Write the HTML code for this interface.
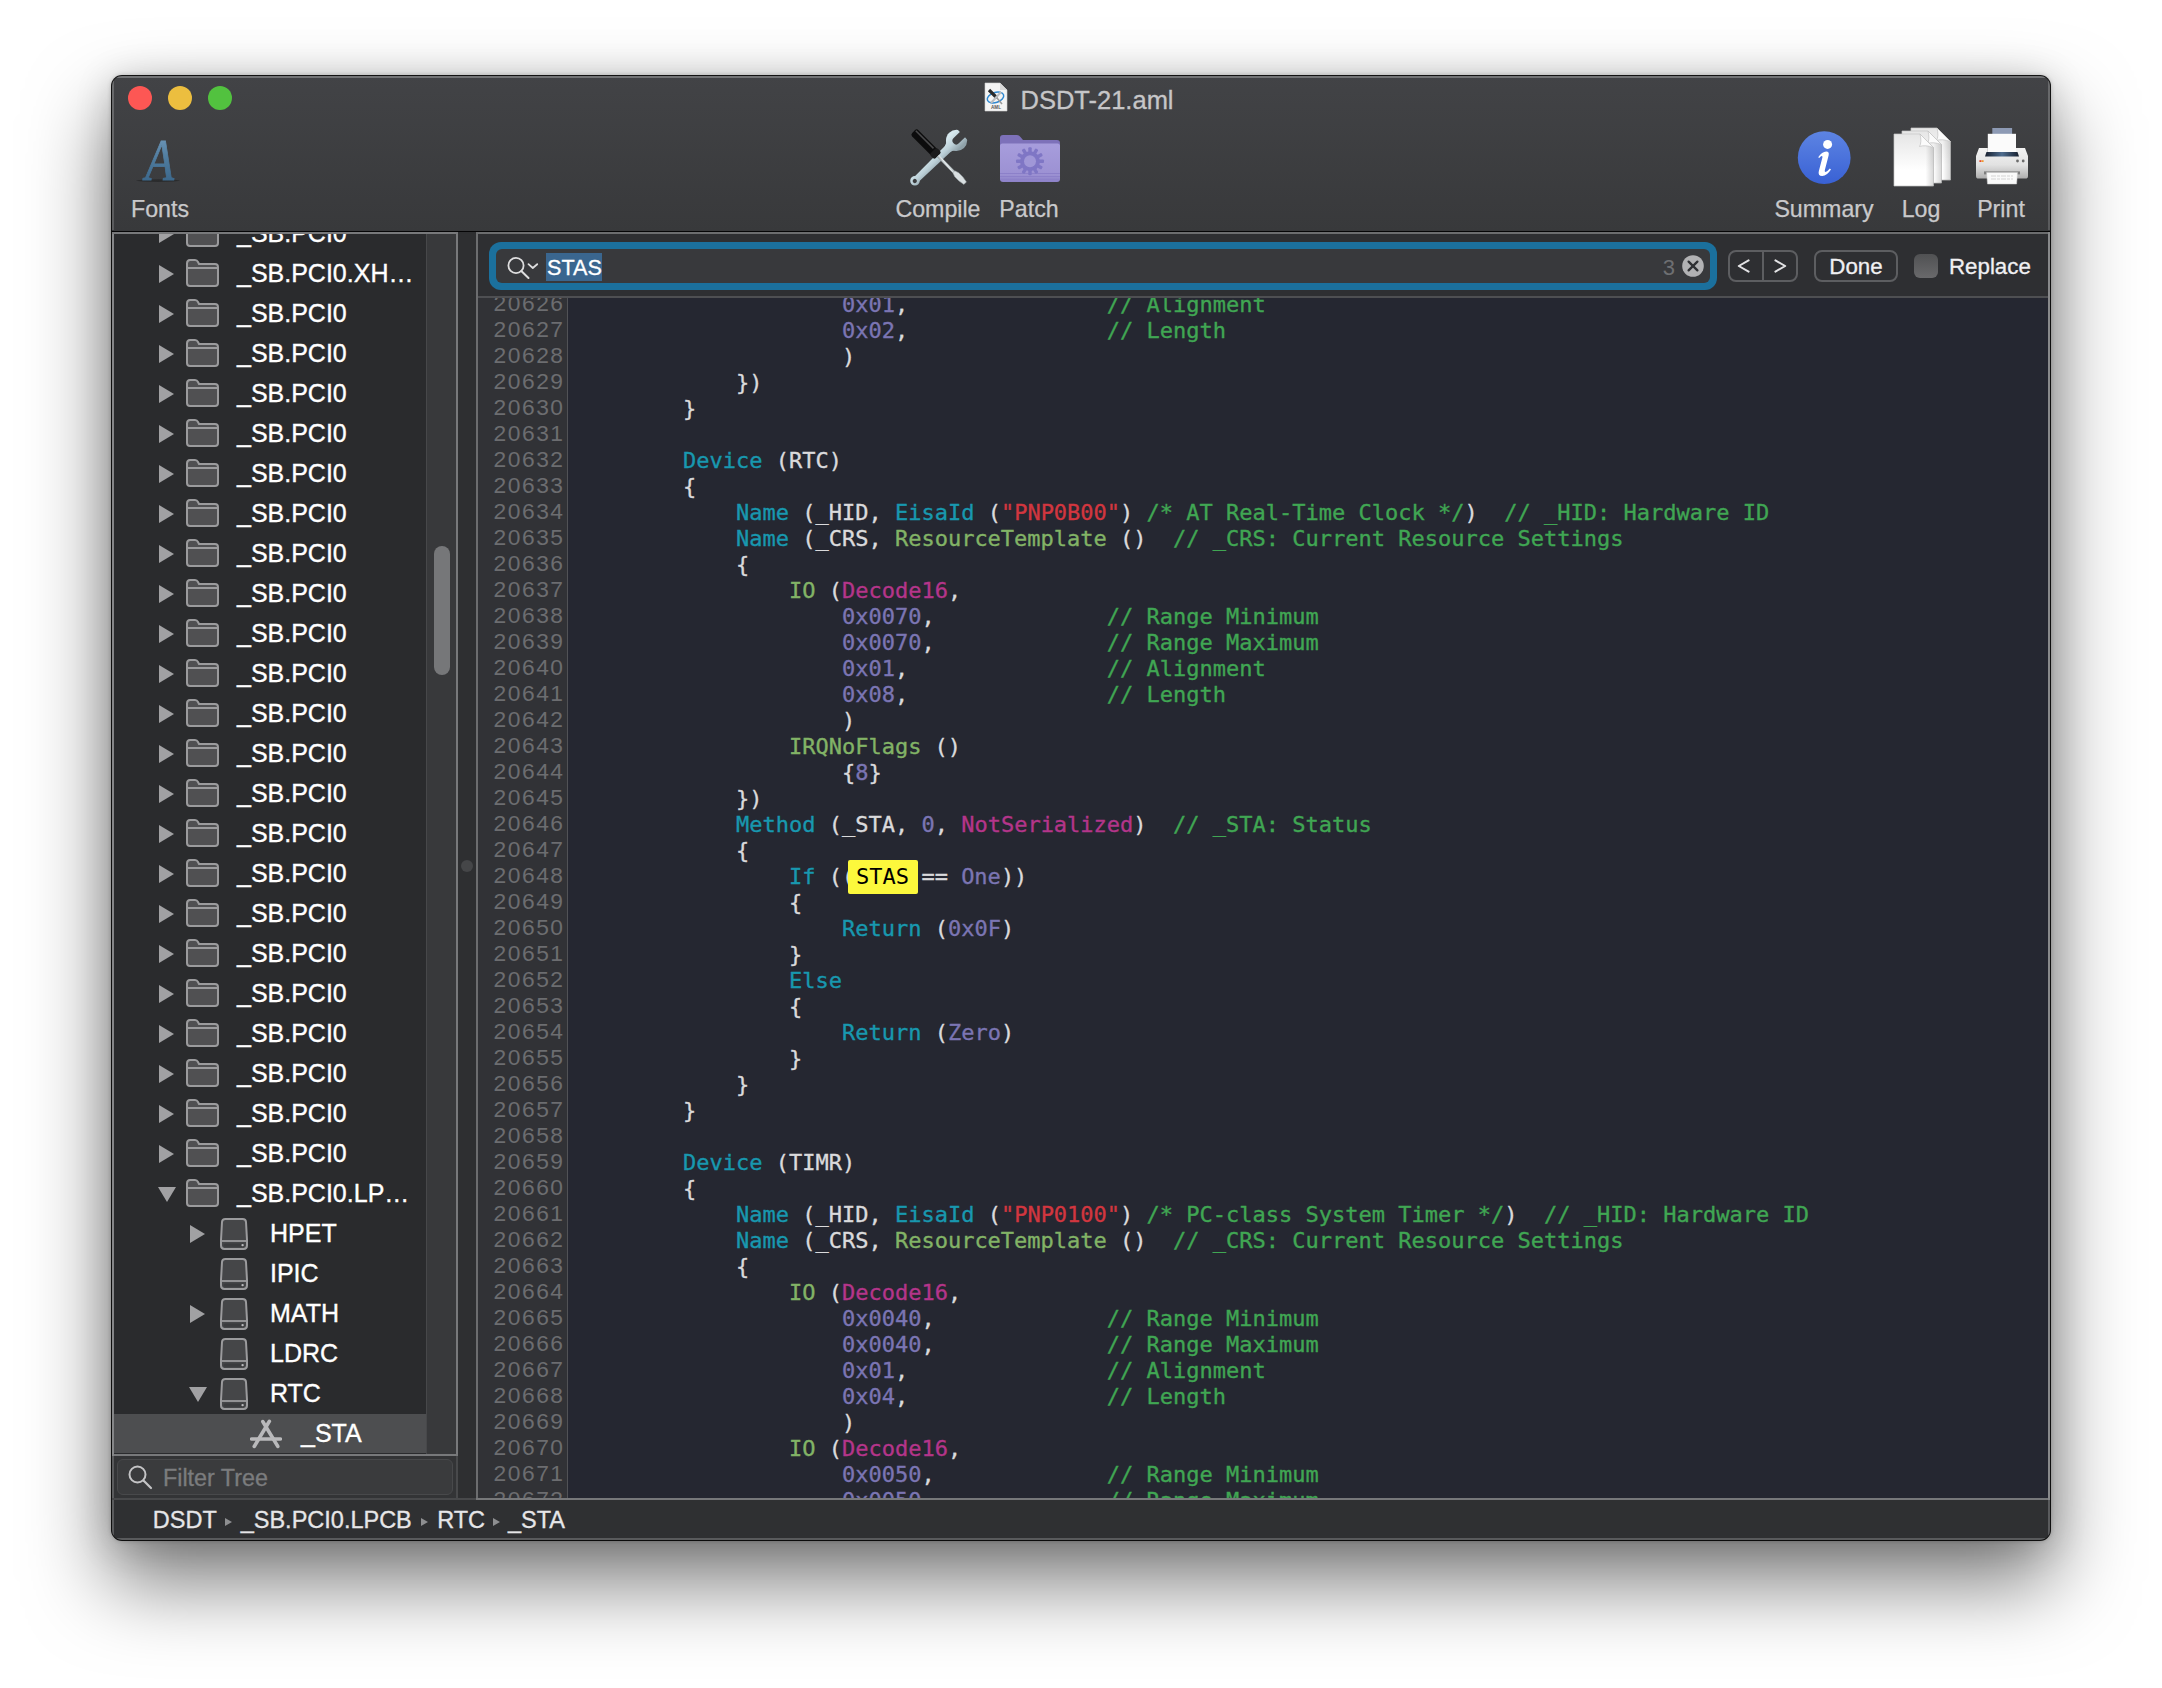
<!DOCTYPE html><html><head><meta charset="utf-8"><title>DSDT-21.aml</title><style>
html,body{margin:0;padding:0;}
body{width:2162px;height:1688px;background:#fff;overflow:hidden;position:relative;font-family:"Liberation Sans", sans-serif;}
#shadow{position:absolute;left:112px;top:76px;width:1938px;height:1464px;border-radius:10px;background:#2f3032;
 box-shadow:0 0 0 1px rgba(0,0,0,.9),0 40px 80px 4px rgba(0,0,0,.50),0 4px 36px 2px rgba(0,0,0,.16),0 0 5px rgba(0,0,0,.3);}
#win{position:absolute;left:0;top:0;width:2162px;height:1688px;clip-path:inset(76px 112px 148px 112px round 10px);}
#win div,#win span,#win svg{position:absolute;}
#win span.t{position:static;}
#tb{left:112px;top:76px;width:1938px;height:155px;background:linear-gradient(#424346,#38393b);}
#tbhl{left:112px;top:76px;width:1938px;height:2px;background:#737476;}
#tbline{left:112px;top:231px;width:1938px;height:1px;background:#050506;}
.lbl{font-size:23.2px;color:#c9c9cb;-webkit-text-stroke:.25px;white-space:nowrap;line-height:26px;height:26px;text-align:center;}
#title{left:1020.5px;top:83.5px;font-size:25.5px;line-height:32px;color:#c6c6c8;white-space:nowrap;-webkit-text-stroke:.3px;}
/* sidebar */
#side{left:112px;top:232px;width:346px;height:1224px;background:#78797b;}
#tree{left:114px;top:234px;width:312px;height:1220px;background:#2a2b2d;overflow:hidden;}
#track{left:426px;top:234px;width:30px;height:1220px;background:#38393b;border-left:1px solid #47484a;box-sizing:border-box;}
#thumb{left:434px;top:546px;width:16px;height:129px;border-radius:8px;background:#767779;}
#filt{left:112px;top:1456px;width:346px;height:42px;background:#333436;border-right:2px solid #48494b;border-left:2px solid #5a5b5d;box-sizing:border-box;}
#ff{left:117px;top:1459px;width:336px;height:36px;background:#3a3b3d;border:1px solid #48494b;border-radius:6px;box-sizing:border-box;}
#fft{left:163px;top:1465px;font-size:23.3px;line-height:26px;color:#7b7c7e;-webkit-text-stroke:.3px #7b7c7e;white-space:nowrap;}
.row{left:0;width:312px;height:40px;}
.row .tx{font-size:25px;line-height:40px;color:#fff;white-space:nowrap;top:0;-webkit-text-stroke:.35px #fff;}
#divd{left:458px;top:232px;width:18px;height:1266px;background:#2e2f31;}
#dot{left:461px;top:860px;width:12px;height:12px;border-radius:6px;background:#454648;}
/* editor */
#ed{left:476px;top:232px;width:1574px;height:1266px;background:#6c6d6f;}
#find{left:478px;top:234px;width:1570px;height:62px;background:#2e2f32;}
#findline{left:478px;top:296px;width:1570px;height:2px;background:#4e4f52;}
#gut{left:478px;top:298px;width:90px;height:1200px;background:#313236;border-right:1px solid #515256;box-sizing:border-box;overflow:hidden;}
#code{left:568px;top:298px;width:1480px;height:1200px;background:#252731;overflow:hidden;}
.ln{right:2.5px;width:84px;text-align:right;font-size:22.8px;letter-spacing:1.5px;color:#6c6d70;line-height:26px;height:26px;white-space:nowrap;}
.cl{left:9px;font-family:"DejaVu Sans Mono", "Liberation Mono", monospace;font-size:22px;line-height:26px;height:26px;color:#dadadc;white-space:pre;-webkit-text-stroke:.35px;}
.k{color:#1898af;} .g{color:#82b366;} .m{color:#b4358a;} .n{color:#7b75b3;} .s{color:#d2363f;} .c{color:#40a653;}
#hl{left:848px;top:860px;width:70px;height:34px;background:#fcf83c;border-radius:2px;}
#hlt{left:0;top:0;font-family:"DejaVu Sans Mono", "Liberation Mono", monospace;font-size:22px;line-height:26px;color:#000;white-space:pre;}
/* status */
#stline{left:112px;top:1498px;width:1938px;height:2px;background:linear-gradient(90deg,#48494b 364px,#77787a 364px);}
#st{left:112px;top:1500px;width:1938px;height:40px;background:#2f3032;}
.sts{top:1504.5px;font-size:23.5px;line-height:30px;color:#e6e6e8;white-space:nowrap;-webkit-text-stroke:.3px #e6e6e8;}
#stt .ar{color:#8a8b8d;font-size:13px;position:static;vertical-align:2px;margin:0 7px;}
</style></head><body>
<div id="shadow"></div><div id="win">
<div id="tb"></div><div id="tbhl"></div><div id="tbline"></div>
<div style="left:128px;top:86px;width:24px;height:24px;border-radius:12px;background:#fd5754"></div>
<div style="left:168px;top:86px;width:24px;height:24px;border-radius:12px;background:#ecbe3f"></div>
<div style="left:208px;top:86px;width:24px;height:24px;border-radius:12px;background:#52c23f"></div>
<div id="title">DSDT-21.aml</div>
<div class="lbl" style="left:60px;top:195.5px;width:200px">Fonts</div>
<div class="lbl" style="left:838px;top:195.5px;width:200px">Compile</div>
<div class="lbl" style="left:929px;top:195.5px;width:200px">Patch</div>
<div class="lbl" style="left:1724px;top:195.5px;width:200px">Summary</div>
<div class="lbl" style="left:1821px;top:195.5px;width:200px">Log</div>
<div class="lbl" style="left:1901px;top:195.5px;width:200px">Print</div>
<svg style="left:120px;top:120px" width="80" height="72" viewBox="0 0 80 72"><defs><linearGradient id="ag" gradientUnits="userSpaceOnUse" x1="0" y1="-42" x2="0" y2="2"><stop offset="0" stop-color="#6a94b6"/><stop offset=".5" stop-color="#4d7a9d"/><stop offset="1" stop-color="#3b678b"/></linearGradient></defs><ellipse cx="38" cy="60.6" rx="22" ry="1.3" fill="#000" opacity=".28"/><text transform="translate(39.5 60.2) scale(.79 1)" text-anchor="middle" font-family="'Liberation Serif',serif" font-style="italic" font-size="59.5" fill="url(#ag)" stroke="url(#ag)" stroke-width=".9">A</text></svg>
<svg style="left:984px;top:82px" width="24" height="30" viewBox="0 0 24 30"><path d="M1 1H16L23 8V29H1Z" fill="#f4f4f4" stroke="#d0d0d0" stroke-width=".6"/><path d="M16 1V8H23Z" fill="#d9d9d9"/><ellipse cx="11.5" cy="15.5" rx="8.5" ry="5" fill="none" stroke="#2f88d0" stroke-width="1.5" transform="rotate(-18 11.5 15.5)"/><path d="M5 8L13 16" stroke="#2a2a2a" stroke-width="3.2"/><path d="M13 16L18 22" stroke="#9a9a9a" stroke-width="1.5"/><path d="M17 10L7 21" stroke="#b9bcc0" stroke-width="2"/><text x="12" y="27.3" font-family="Liberation Sans, sans-serif" font-size="4.6" font-weight="bold" text-anchor="middle" fill="#555">AML</text></svg>
<svg style="left:908px;top:126px" width="62" height="62" viewBox="-2 -2 62 62">
<defs><linearGradient id="wr" x1="0" y1="0" x2="1" y2="1"><stop offset="0" stop-color="#d3e6ec"/><stop offset=".6" stop-color="#a9bdc5"/><stop offset="1" stop-color="#8e9fa6"/></linearGradient>
<linearGradient id="wr2" x1="0" y1="0" x2="0" y2="1"><stop offset=".3" stop-color="#d6e8ee"/><stop offset=".5" stop-color="#bcd0d8"/><stop offset=".7" stop-color="#8fa1a9"/></linearGradient><linearGradient id="sh" x1="0" y1="1" x2="1" y2="0"><stop offset="0" stop-color="#8d979b"/><stop offset=".5" stop-color="#e4eaec"/><stop offset="1" stop-color="#9aa4a8"/></linearGradient></defs>
<mask id="wm" maskUnits="userSpaceOnUse" x="-10" y="-20" width="90" height="40"><rect x="-10" y="-20" width="90" height="40" fill="#000"/><circle cx="0" cy="0" r="4.8" fill="#fff"/><path d="M2 -3.3L50 -4.2V4.2L2 3.3Z" fill="#fff"/><circle cx="58" cy="0" r="10.6" fill="#fff"/><path d="M45 -3.8Q49 -4.5 51 -8L53 0L51 8Q49 4.5 45 3.8Z" fill="#fff"/><path d="M75 -3.7H57.5Q53.8 -3.7 53.8 0Q53.8 3.7 57.5 3.7H75Z" fill="#000"/><rect x="66.2" y="-12" width="10" height="24" fill="#000"/><circle cx="-0.3" cy="0" r="2.1" fill="#000"/></mask>
<g transform="translate(5 52.8) rotate(-44.2)"><rect x="-10" y="-20" width="90" height="40" fill="url(#wr2)" mask="url(#wm)"/></g>
<g transform="rotate(45 29 29)"><rect x="-7" y="24.6" width="34" height="8.8" rx="2.5" fill="#0c0c0d"/><rect x="-6" y="26" width="25" height="1.6" fill="#4a4a4c"/><rect x="20.5" y="24" width="7" height="10" rx="2" fill="#1b1b1c"/><rect x="27.5" y="27.6" width="24" height="2.8" fill="url(#sh)"/><path d="M50 27.6L54 26.2H60L66 27.2V30.8L60 31.8H54L50 30.4Z" fill="#d9dfe1" stroke="#8f989c" stroke-width=".5"/></g></svg>
<svg style="left:998px;top:133px" width="64" height="52" viewBox="0 0 64 52">
<defs><linearGradient id="pf" x1="0" y1="0" x2="0" y2="1"><stop offset="0" stop-color="#a79ddc"/><stop offset=".8" stop-color="#9c91d3"/><stop offset="1" stop-color="#8d82c8"/></linearGradient></defs>
<path d="M2 5Q2 2 5 2H19Q21 2 22.5 4L25 7H59Q62 7 62 10V20H2Z" fill="#7d71b9"/>
<path d="M2 13Q2 10.5 4.5 10.5H59.5Q62 10.5 62 13V46Q62 49 59 49H5Q2 49 2 46Z" fill="url(#pf)"/>
<path d="M2 40.5H62M2 43.5H62M2 46.3H62" stroke="#8c80c9" stroke-width="1"/>
<g transform="translate(32 28.2)" fill="#7f76c5"><circle r="10" /><g id="tth"><rect x="-1.7" y="-14" width="3.4" height="6" rx="1"/></g><use href="#tth" transform="rotate(30)"/><use href="#tth" transform="rotate(60)"/><use href="#tth" transform="rotate(90)"/><use href="#tth" transform="rotate(120)"/><use href="#tth" transform="rotate(150)"/><use href="#tth" transform="rotate(180)"/><use href="#tth" transform="rotate(210)"/><use href="#tth" transform="rotate(240)"/><use href="#tth" transform="rotate(270)"/><use href="#tth" transform="rotate(300)"/><use href="#tth" transform="rotate(330)"/><circle r="6" fill="#a097d7"/></g></svg>
<svg style="left:1796px;top:130px" width="56" height="56" viewBox="0 0 56 56"><defs><linearGradient id="sm" x1="0" y1="0" x2="0" y2="1"><stop offset="0" stop-color="#5d84e3"/><stop offset="1" stop-color="#3961d4"/></linearGradient></defs><circle cx="28.2" cy="27.7" r="26.4" fill="url(#sm)"/><circle cx="31.6" cy="14.4" r="4.5" fill="#fff"/><path d="M22.2 27.2Q26 22 30.2 21.6Q33.6 21.6 32.6 25.6L28.8 40.2Q28.4 42 29.6 42Q31.4 41.6 33.8 38.6L35 39.4Q31 45.6 26.2 46Q21.6 46 22.8 41.2L26.4 27.6Q26.8 25.8 25.6 26Q24.4 26.4 23.2 28Z" fill="#fff"/></svg>
<svg style="left:1892px;top:126px" width="62" height="62" viewBox="0 0 62 62"><defs><linearGradient id="dg" x1="0" y1="0" x2="0" y2="1"><stop offset="0" stop-color="#e6e6e6"/><stop offset=".7" stop-color="#ffffff"/></linearGradient></defs>
<linearGradient id="de" x1="0" y1="0" x2="1" y2="0"><stop offset=".8" stop-color="#000" stop-opacity="0"/><stop offset="1" stop-color="#000" stop-opacity=".16"/></linearGradient><g id="docp"><path d="M19 2H45L58.5 15.5V54H19Z" fill="url(#dg)" stroke="#c4c4c4" stroke-width=".7"/><path d="M19 2H45L58.5 15.5V54H19Z" fill="url(#de)"/><path d="M45 2Q47 10 44.5 14.5Q50 12.6 58.5 15.5Z" fill="#fbfbfb" stroke="#c2c2c2" stroke-width=".7"/></g>
<use href="#docp" x="-9" y="3"/><use href="#docp" x="-17" y="6"/></svg>
<svg style="left:1974px;top:126px" width="56" height="60" viewBox="0 0 56 60"><defs><linearGradient id="pb" x1="0" y1="0" x2="0" y2="1"><stop offset="0" stop-color="#f3f3f3"/><stop offset=".55" stop-color="#e2e2e2"/><stop offset="1" stop-color="#aeaeae"/></linearGradient><linearGradient id="ps" x1="0" y1="0" x2="1" y2="0"><stop offset="0" stop-color="#17202f"/><stop offset=".5" stop-color="#4f6d8f"/><stop offset="1" stop-color="#17202f"/></linearGradient></defs>
<rect x="18.3" y="2" width="19.8" height="7" fill="#8d9ab4"/><rect x="16.4" y="14" width="23.6" height="12" fill="#7d8aa6"/>
<rect x="13.8" y="7.8" width="28.2" height="19" fill="#fbfbfb"/>
<path d="M5 22H13.8V27H42V22H51L54 30V50Q54 52.6 51.4 52.6H4.6Q2 52.6 2 50V30Z" fill="url(#pb)"/>
<path d="M12.5 26H43.5L45 30.4H11Z" fill="url(#ps)"/>
<rect x="5.4" y="34.2" width="2" height="1.8" fill="#e8452c"/><rect x="7.6" y="34.2" width="2" height="1.8" fill="#f09a2c"/>
<circle cx="43.5" cy="35" r="1.4" fill="#6c6c6c"/><circle cx="49.2" cy="35" r="1.4" fill="#6c6c6c"/>
<rect x="10" y="45.4" width="36" height="3" fill="#7e7e7e"/>
<path d="M12.6 46.4H43.5L42.6 58H13.5Z" fill="#fafafa" stroke="#cfcfcf" stroke-width=".5"/>
<path d="M17 50H39M17 53H39" stroke="#d4d4d4" stroke-width="1.2" stroke-dasharray="5 1 3 1"/></svg>

<div id="side"></div><div id="tree">
<div class="row" style="top:-21px;"><svg style="left:45px;top:12px" width="15" height="18" viewBox="0 0 15 18"><path d="M0 0L15 9L0 18Z" fill="#a1a1a3"/></svg><svg style="left:72px;top:6px" width="33" height="28" viewBox="0 0 33 28"><path d="M1 4.5Q1 1 4 1H9Q11 1 12 3L13 5H29Q32 5 32 8V24Q32 27 29 27H4Q1 27 1 24Z" fill="#505052" stroke="#9b9b9d" stroke-width="2"/><path d="M1 9H32" stroke="#9b9b9d" stroke-width="2"/></svg><span class="tx" style="left:123px">_SB.PCI0</span></div>
<div class="row" style="top:19px;"><svg style="left:45px;top:12px" width="15" height="18" viewBox="0 0 15 18"><path d="M0 0L15 9L0 18Z" fill="#a1a1a3"/></svg><svg style="left:72px;top:6px" width="33" height="28" viewBox="0 0 33 28"><path d="M1 4.5Q1 1 4 1H9Q11 1 12 3L13 5H29Q32 5 32 8V24Q32 27 29 27H4Q1 27 1 24Z" fill="#505052" stroke="#9b9b9d" stroke-width="2"/><path d="M1 9H32" stroke="#9b9b9d" stroke-width="2"/></svg><span class="tx" style="left:123px">_SB.PCI0.XH…</span></div>
<div class="row" style="top:59px;"><svg style="left:45px;top:12px" width="15" height="18" viewBox="0 0 15 18"><path d="M0 0L15 9L0 18Z" fill="#a1a1a3"/></svg><svg style="left:72px;top:6px" width="33" height="28" viewBox="0 0 33 28"><path d="M1 4.5Q1 1 4 1H9Q11 1 12 3L13 5H29Q32 5 32 8V24Q32 27 29 27H4Q1 27 1 24Z" fill="#505052" stroke="#9b9b9d" stroke-width="2"/><path d="M1 9H32" stroke="#9b9b9d" stroke-width="2"/></svg><span class="tx" style="left:123px">_SB.PCI0</span></div>
<div class="row" style="top:99px;"><svg style="left:45px;top:12px" width="15" height="18" viewBox="0 0 15 18"><path d="M0 0L15 9L0 18Z" fill="#a1a1a3"/></svg><svg style="left:72px;top:6px" width="33" height="28" viewBox="0 0 33 28"><path d="M1 4.5Q1 1 4 1H9Q11 1 12 3L13 5H29Q32 5 32 8V24Q32 27 29 27H4Q1 27 1 24Z" fill="#505052" stroke="#9b9b9d" stroke-width="2"/><path d="M1 9H32" stroke="#9b9b9d" stroke-width="2"/></svg><span class="tx" style="left:123px">_SB.PCI0</span></div>
<div class="row" style="top:139px;"><svg style="left:45px;top:12px" width="15" height="18" viewBox="0 0 15 18"><path d="M0 0L15 9L0 18Z" fill="#a1a1a3"/></svg><svg style="left:72px;top:6px" width="33" height="28" viewBox="0 0 33 28"><path d="M1 4.5Q1 1 4 1H9Q11 1 12 3L13 5H29Q32 5 32 8V24Q32 27 29 27H4Q1 27 1 24Z" fill="#505052" stroke="#9b9b9d" stroke-width="2"/><path d="M1 9H32" stroke="#9b9b9d" stroke-width="2"/></svg><span class="tx" style="left:123px">_SB.PCI0</span></div>
<div class="row" style="top:179px;"><svg style="left:45px;top:12px" width="15" height="18" viewBox="0 0 15 18"><path d="M0 0L15 9L0 18Z" fill="#a1a1a3"/></svg><svg style="left:72px;top:6px" width="33" height="28" viewBox="0 0 33 28"><path d="M1 4.5Q1 1 4 1H9Q11 1 12 3L13 5H29Q32 5 32 8V24Q32 27 29 27H4Q1 27 1 24Z" fill="#505052" stroke="#9b9b9d" stroke-width="2"/><path d="M1 9H32" stroke="#9b9b9d" stroke-width="2"/></svg><span class="tx" style="left:123px">_SB.PCI0</span></div>
<div class="row" style="top:219px;"><svg style="left:45px;top:12px" width="15" height="18" viewBox="0 0 15 18"><path d="M0 0L15 9L0 18Z" fill="#a1a1a3"/></svg><svg style="left:72px;top:6px" width="33" height="28" viewBox="0 0 33 28"><path d="M1 4.5Q1 1 4 1H9Q11 1 12 3L13 5H29Q32 5 32 8V24Q32 27 29 27H4Q1 27 1 24Z" fill="#505052" stroke="#9b9b9d" stroke-width="2"/><path d="M1 9H32" stroke="#9b9b9d" stroke-width="2"/></svg><span class="tx" style="left:123px">_SB.PCI0</span></div>
<div class="row" style="top:259px;"><svg style="left:45px;top:12px" width="15" height="18" viewBox="0 0 15 18"><path d="M0 0L15 9L0 18Z" fill="#a1a1a3"/></svg><svg style="left:72px;top:6px" width="33" height="28" viewBox="0 0 33 28"><path d="M1 4.5Q1 1 4 1H9Q11 1 12 3L13 5H29Q32 5 32 8V24Q32 27 29 27H4Q1 27 1 24Z" fill="#505052" stroke="#9b9b9d" stroke-width="2"/><path d="M1 9H32" stroke="#9b9b9d" stroke-width="2"/></svg><span class="tx" style="left:123px">_SB.PCI0</span></div>
<div class="row" style="top:299px;"><svg style="left:45px;top:12px" width="15" height="18" viewBox="0 0 15 18"><path d="M0 0L15 9L0 18Z" fill="#a1a1a3"/></svg><svg style="left:72px;top:6px" width="33" height="28" viewBox="0 0 33 28"><path d="M1 4.5Q1 1 4 1H9Q11 1 12 3L13 5H29Q32 5 32 8V24Q32 27 29 27H4Q1 27 1 24Z" fill="#505052" stroke="#9b9b9d" stroke-width="2"/><path d="M1 9H32" stroke="#9b9b9d" stroke-width="2"/></svg><span class="tx" style="left:123px">_SB.PCI0</span></div>
<div class="row" style="top:339px;"><svg style="left:45px;top:12px" width="15" height="18" viewBox="0 0 15 18"><path d="M0 0L15 9L0 18Z" fill="#a1a1a3"/></svg><svg style="left:72px;top:6px" width="33" height="28" viewBox="0 0 33 28"><path d="M1 4.5Q1 1 4 1H9Q11 1 12 3L13 5H29Q32 5 32 8V24Q32 27 29 27H4Q1 27 1 24Z" fill="#505052" stroke="#9b9b9d" stroke-width="2"/><path d="M1 9H32" stroke="#9b9b9d" stroke-width="2"/></svg><span class="tx" style="left:123px">_SB.PCI0</span></div>
<div class="row" style="top:379px;"><svg style="left:45px;top:12px" width="15" height="18" viewBox="0 0 15 18"><path d="M0 0L15 9L0 18Z" fill="#a1a1a3"/></svg><svg style="left:72px;top:6px" width="33" height="28" viewBox="0 0 33 28"><path d="M1 4.5Q1 1 4 1H9Q11 1 12 3L13 5H29Q32 5 32 8V24Q32 27 29 27H4Q1 27 1 24Z" fill="#505052" stroke="#9b9b9d" stroke-width="2"/><path d="M1 9H32" stroke="#9b9b9d" stroke-width="2"/></svg><span class="tx" style="left:123px">_SB.PCI0</span></div>
<div class="row" style="top:419px;"><svg style="left:45px;top:12px" width="15" height="18" viewBox="0 0 15 18"><path d="M0 0L15 9L0 18Z" fill="#a1a1a3"/></svg><svg style="left:72px;top:6px" width="33" height="28" viewBox="0 0 33 28"><path d="M1 4.5Q1 1 4 1H9Q11 1 12 3L13 5H29Q32 5 32 8V24Q32 27 29 27H4Q1 27 1 24Z" fill="#505052" stroke="#9b9b9d" stroke-width="2"/><path d="M1 9H32" stroke="#9b9b9d" stroke-width="2"/></svg><span class="tx" style="left:123px">_SB.PCI0</span></div>
<div class="row" style="top:459px;"><svg style="left:45px;top:12px" width="15" height="18" viewBox="0 0 15 18"><path d="M0 0L15 9L0 18Z" fill="#a1a1a3"/></svg><svg style="left:72px;top:6px" width="33" height="28" viewBox="0 0 33 28"><path d="M1 4.5Q1 1 4 1H9Q11 1 12 3L13 5H29Q32 5 32 8V24Q32 27 29 27H4Q1 27 1 24Z" fill="#505052" stroke="#9b9b9d" stroke-width="2"/><path d="M1 9H32" stroke="#9b9b9d" stroke-width="2"/></svg><span class="tx" style="left:123px">_SB.PCI0</span></div>
<div class="row" style="top:499px;"><svg style="left:45px;top:12px" width="15" height="18" viewBox="0 0 15 18"><path d="M0 0L15 9L0 18Z" fill="#a1a1a3"/></svg><svg style="left:72px;top:6px" width="33" height="28" viewBox="0 0 33 28"><path d="M1 4.5Q1 1 4 1H9Q11 1 12 3L13 5H29Q32 5 32 8V24Q32 27 29 27H4Q1 27 1 24Z" fill="#505052" stroke="#9b9b9d" stroke-width="2"/><path d="M1 9H32" stroke="#9b9b9d" stroke-width="2"/></svg><span class="tx" style="left:123px">_SB.PCI0</span></div>
<div class="row" style="top:539px;"><svg style="left:45px;top:12px" width="15" height="18" viewBox="0 0 15 18"><path d="M0 0L15 9L0 18Z" fill="#a1a1a3"/></svg><svg style="left:72px;top:6px" width="33" height="28" viewBox="0 0 33 28"><path d="M1 4.5Q1 1 4 1H9Q11 1 12 3L13 5H29Q32 5 32 8V24Q32 27 29 27H4Q1 27 1 24Z" fill="#505052" stroke="#9b9b9d" stroke-width="2"/><path d="M1 9H32" stroke="#9b9b9d" stroke-width="2"/></svg><span class="tx" style="left:123px">_SB.PCI0</span></div>
<div class="row" style="top:579px;"><svg style="left:45px;top:12px" width="15" height="18" viewBox="0 0 15 18"><path d="M0 0L15 9L0 18Z" fill="#a1a1a3"/></svg><svg style="left:72px;top:6px" width="33" height="28" viewBox="0 0 33 28"><path d="M1 4.5Q1 1 4 1H9Q11 1 12 3L13 5H29Q32 5 32 8V24Q32 27 29 27H4Q1 27 1 24Z" fill="#505052" stroke="#9b9b9d" stroke-width="2"/><path d="M1 9H32" stroke="#9b9b9d" stroke-width="2"/></svg><span class="tx" style="left:123px">_SB.PCI0</span></div>
<div class="row" style="top:619px;"><svg style="left:45px;top:12px" width="15" height="18" viewBox="0 0 15 18"><path d="M0 0L15 9L0 18Z" fill="#a1a1a3"/></svg><svg style="left:72px;top:6px" width="33" height="28" viewBox="0 0 33 28"><path d="M1 4.5Q1 1 4 1H9Q11 1 12 3L13 5H29Q32 5 32 8V24Q32 27 29 27H4Q1 27 1 24Z" fill="#505052" stroke="#9b9b9d" stroke-width="2"/><path d="M1 9H32" stroke="#9b9b9d" stroke-width="2"/></svg><span class="tx" style="left:123px">_SB.PCI0</span></div>
<div class="row" style="top:659px;"><svg style="left:45px;top:12px" width="15" height="18" viewBox="0 0 15 18"><path d="M0 0L15 9L0 18Z" fill="#a1a1a3"/></svg><svg style="left:72px;top:6px" width="33" height="28" viewBox="0 0 33 28"><path d="M1 4.5Q1 1 4 1H9Q11 1 12 3L13 5H29Q32 5 32 8V24Q32 27 29 27H4Q1 27 1 24Z" fill="#505052" stroke="#9b9b9d" stroke-width="2"/><path d="M1 9H32" stroke="#9b9b9d" stroke-width="2"/></svg><span class="tx" style="left:123px">_SB.PCI0</span></div>
<div class="row" style="top:699px;"><svg style="left:45px;top:12px" width="15" height="18" viewBox="0 0 15 18"><path d="M0 0L15 9L0 18Z" fill="#a1a1a3"/></svg><svg style="left:72px;top:6px" width="33" height="28" viewBox="0 0 33 28"><path d="M1 4.5Q1 1 4 1H9Q11 1 12 3L13 5H29Q32 5 32 8V24Q32 27 29 27H4Q1 27 1 24Z" fill="#505052" stroke="#9b9b9d" stroke-width="2"/><path d="M1 9H32" stroke="#9b9b9d" stroke-width="2"/></svg><span class="tx" style="left:123px">_SB.PCI0</span></div>
<div class="row" style="top:739px;"><svg style="left:45px;top:12px" width="15" height="18" viewBox="0 0 15 18"><path d="M0 0L15 9L0 18Z" fill="#a1a1a3"/></svg><svg style="left:72px;top:6px" width="33" height="28" viewBox="0 0 33 28"><path d="M1 4.5Q1 1 4 1H9Q11 1 12 3L13 5H29Q32 5 32 8V24Q32 27 29 27H4Q1 27 1 24Z" fill="#505052" stroke="#9b9b9d" stroke-width="2"/><path d="M1 9H32" stroke="#9b9b9d" stroke-width="2"/></svg><span class="tx" style="left:123px">_SB.PCI0</span></div>
<div class="row" style="top:779px;"><svg style="left:45px;top:12px" width="15" height="18" viewBox="0 0 15 18"><path d="M0 0L15 9L0 18Z" fill="#a1a1a3"/></svg><svg style="left:72px;top:6px" width="33" height="28" viewBox="0 0 33 28"><path d="M1 4.5Q1 1 4 1H9Q11 1 12 3L13 5H29Q32 5 32 8V24Q32 27 29 27H4Q1 27 1 24Z" fill="#505052" stroke="#9b9b9d" stroke-width="2"/><path d="M1 9H32" stroke="#9b9b9d" stroke-width="2"/></svg><span class="tx" style="left:123px">_SB.PCI0</span></div>
<div class="row" style="top:819px;"><svg style="left:45px;top:12px" width="15" height="18" viewBox="0 0 15 18"><path d="M0 0L15 9L0 18Z" fill="#a1a1a3"/></svg><svg style="left:72px;top:6px" width="33" height="28" viewBox="0 0 33 28"><path d="M1 4.5Q1 1 4 1H9Q11 1 12 3L13 5H29Q32 5 32 8V24Q32 27 29 27H4Q1 27 1 24Z" fill="#505052" stroke="#9b9b9d" stroke-width="2"/><path d="M1 9H32" stroke="#9b9b9d" stroke-width="2"/></svg><span class="tx" style="left:123px">_SB.PCI0</span></div>
<div class="row" style="top:859px;"><svg style="left:45px;top:12px" width="15" height="18" viewBox="0 0 15 18"><path d="M0 0L15 9L0 18Z" fill="#a1a1a3"/></svg><svg style="left:72px;top:6px" width="33" height="28" viewBox="0 0 33 28"><path d="M1 4.5Q1 1 4 1H9Q11 1 12 3L13 5H29Q32 5 32 8V24Q32 27 29 27H4Q1 27 1 24Z" fill="#505052" stroke="#9b9b9d" stroke-width="2"/><path d="M1 9H32" stroke="#9b9b9d" stroke-width="2"/></svg><span class="tx" style="left:123px">_SB.PCI0</span></div>
<div class="row" style="top:899px;"><svg style="left:45px;top:12px" width="15" height="18" viewBox="0 0 15 18"><path d="M0 0L15 9L0 18Z" fill="#a1a1a3"/></svg><svg style="left:72px;top:6px" width="33" height="28" viewBox="0 0 33 28"><path d="M1 4.5Q1 1 4 1H9Q11 1 12 3L13 5H29Q32 5 32 8V24Q32 27 29 27H4Q1 27 1 24Z" fill="#505052" stroke="#9b9b9d" stroke-width="2"/><path d="M1 9H32" stroke="#9b9b9d" stroke-width="2"/></svg><span class="tx" style="left:123px">_SB.PCI0</span></div>
<div class="row" style="top:939px;"><svg style="left:44px;top:14px" width="18" height="15" viewBox="0 0 18 15"><path d="M0 0L18 0L9 15Z" fill="#a1a1a3"/></svg><svg style="left:72px;top:6px" width="33" height="28" viewBox="0 0 33 28"><path d="M1 4.5Q1 1 4 1H9Q11 1 12 3L13 5H29Q32 5 32 8V24Q32 27 29 27H4Q1 27 1 24Z" fill="#505052" stroke="#9b9b9d" stroke-width="2"/><path d="M1 9H32" stroke="#9b9b9d" stroke-width="2"/></svg><span class="tx" style="left:123px">_SB.PCI0.LP…</span></div>
<div class="row" style="top:979px;"><svg style="left:76px;top:12px" width="15" height="18" viewBox="0 0 15 18"><path d="M0 0L15 9L0 18Z" fill="#a1a1a3"/></svg><svg style="left:106px;top:5px" width="28" height="32" viewBox="0 0 28 32"><path d="M2 4Q2.2 1 5.4 1H22.6Q25.8 1 26 4L27 22V27.6Q27 31 23.6 31H4.4Q1 31 1 27.6V22Z" fill="#454648" stroke="#9b9b9d" stroke-width="2"/><path d="M1 23H27" stroke="#9b9b9d" stroke-width="1.8"/><rect x="3.6" y="25.4" width="20.8" height="3.4" rx="1.6" fill="#3a3b3d"/><circle cx="22.6" cy="27.1" r="1.2" fill="#bdbdbf"/></svg><span class="tx" style="left:156px">HPET</span></div>
<div class="row" style="top:1019px;"><svg style="left:106px;top:5px" width="28" height="32" viewBox="0 0 28 32"><path d="M2 4Q2.2 1 5.4 1H22.6Q25.8 1 26 4L27 22V27.6Q27 31 23.6 31H4.4Q1 31 1 27.6V22Z" fill="#454648" stroke="#9b9b9d" stroke-width="2"/><path d="M1 23H27" stroke="#9b9b9d" stroke-width="1.8"/><rect x="3.6" y="25.4" width="20.8" height="3.4" rx="1.6" fill="#3a3b3d"/><circle cx="22.6" cy="27.1" r="1.2" fill="#bdbdbf"/></svg><span class="tx" style="left:156px">IPIC</span></div>
<div class="row" style="top:1059px;"><svg style="left:76px;top:12px" width="15" height="18" viewBox="0 0 15 18"><path d="M0 0L15 9L0 18Z" fill="#a1a1a3"/></svg><svg style="left:106px;top:5px" width="28" height="32" viewBox="0 0 28 32"><path d="M2 4Q2.2 1 5.4 1H22.6Q25.8 1 26 4L27 22V27.6Q27 31 23.6 31H4.4Q1 31 1 27.6V22Z" fill="#454648" stroke="#9b9b9d" stroke-width="2"/><path d="M1 23H27" stroke="#9b9b9d" stroke-width="1.8"/><rect x="3.6" y="25.4" width="20.8" height="3.4" rx="1.6" fill="#3a3b3d"/><circle cx="22.6" cy="27.1" r="1.2" fill="#bdbdbf"/></svg><span class="tx" style="left:156px">MATH</span></div>
<div class="row" style="top:1099px;"><svg style="left:106px;top:5px" width="28" height="32" viewBox="0 0 28 32"><path d="M2 4Q2.2 1 5.4 1H22.6Q25.8 1 26 4L27 22V27.6Q27 31 23.6 31H4.4Q1 31 1 27.6V22Z" fill="#454648" stroke="#9b9b9d" stroke-width="2"/><path d="M1 23H27" stroke="#9b9b9d" stroke-width="1.8"/><rect x="3.6" y="25.4" width="20.8" height="3.4" rx="1.6" fill="#3a3b3d"/><circle cx="22.6" cy="27.1" r="1.2" fill="#bdbdbf"/></svg><span class="tx" style="left:156px">LDRC</span></div>
<div class="row" style="top:1139px;"><svg style="left:75px;top:14px" width="18" height="15" viewBox="0 0 18 15"><path d="M0 0L18 0L9 15Z" fill="#a1a1a3"/></svg><svg style="left:106px;top:5px" width="28" height="32" viewBox="0 0 28 32"><path d="M2 4Q2.2 1 5.4 1H22.6Q25.8 1 26 4L27 22V27.6Q27 31 23.6 31H4.4Q1 31 1 27.6V22Z" fill="#454648" stroke="#9b9b9d" stroke-width="2"/><path d="M1 23H27" stroke="#9b9b9d" stroke-width="1.8"/><rect x="3.6" y="25.4" width="20.8" height="3.4" rx="1.6" fill="#3a3b3d"/><circle cx="22.6" cy="27.1" r="1.2" fill="#bdbdbf"/></svg><span class="tx" style="left:156px">RTC</span></div>
<div class="row" style="top:1179px; background:linear-gradient(#2a2b2d 1px,#4d4e50 1px);"><svg style="left:136px;top:6px" width="32" height="30" viewBox="0 0 32 30"><g stroke="#b9b9bb" stroke-width="3.7" stroke-linecap="round" fill="none"><path d="M19.3 2.4L4.3 27.4"/><path d="M1.6 20H30.4"/><path d="M12.8 2.6L27.8 27.4"/></g></svg><span class="tx" style="left:187px">_STA</span></div>
</div><div id="track"></div><div id="thumb"></div>
<div id="filt"></div><div id="ff"></div>
<svg style="left:127px;top:1464px" width="26" height="26" viewBox="0 0 26 26"><circle cx="10.5" cy="10.5" r="8" fill="none" stroke="#c4c4c6" stroke-width="2"/><path d="M16.5 16.5L24 24" stroke="#c4c4c6" stroke-width="2.2" stroke-linecap="round"/></svg>
<div id="fft">Filter Tree</div>
<div id="divd"></div><div id="dot"></div>
<div id="ed"></div><div id="find"></div><div id="findline"></div>
<div style="left:489px;top:242px;width:1228px;height:48px;border-radius:12px;background:#1b709d"></div>
<div style="left:496px;top:249px;width:1214px;height:34px;border-radius:6px;background:#38393c"></div>
<svg style="left:505px;top:254px" width="36" height="26" viewBox="0 0 36 26"><circle cx="11" cy="11.5" r="7.6" fill="none" stroke="#dededf" stroke-width="1.8"/><path d="M16.3 17L23.5 24" stroke="#dededf" stroke-width="2" stroke-linecap="round"/><path d="M23.5 10.2L27.8 14L32.2 10.2" fill="none" stroke="#dededf" stroke-width="1.8" stroke-linecap="round" stroke-linejoin="round"/></svg>
<div style="left:546px;top:253px;width:56px;height:28px;background:#3a668f"></div>
<div style="left:547px;top:254px;font-size:21.6px;line-height:28px;color:#fff;-webkit-text-stroke:.3px #fff;white-space:nowrap">STAS</div>
<div style="left:1655px;top:254px;width:20px;text-align:right;font-size:22px;line-height:28px;color:#6e6f72">3</div>
<svg style="left:1682px;top:255px" width="22" height="22" viewBox="0 0 22 22"><circle cx="11" cy="11" r="10.8" fill="#b2b2b4"/><path d="M6.6 6.6L15.4 15.4M15.4 6.6L6.6 15.4" stroke="#2f3033" stroke-width="2.3" stroke-linecap="round"/></svg>
<div style="left:1728px;top:250px;width:70px;height:32px;border:2px solid #5d5e61;border-radius:8px;box-sizing:border-box;background:#2e2f32"></div>
<div style="left:1762px;top:251px;width:2px;height:30px;background:#5d5e61"></div>
<svg style="left:1736px;top:257px" width="54" height="18" viewBox="0 0 54 18"><path d="M12.6 3.4L2.8 9L12.6 14.6M39.4 3.4L49.2 9L39.4 14.6" fill="none" stroke="#e2e2e4" stroke-width="2" stroke-linecap="round" stroke-linejoin="round"/></svg>
<div style="left:1814px;top:250px;width:84px;height:32px;border:2px solid #5d5e61;border-radius:8px;box-sizing:border-box;background:#2e2f32"></div>
<div style="left:1814px;top:253.5px;width:84px;text-align:center;font-size:22.3px;line-height:26px;color:#f0f0f2;-webkit-text-stroke:.3px #f0f0f2">Done</div>
<div style="left:1914px;top:254px;width:24px;height:24px;border-radius:6px;background:linear-gradient(#505153,#69696b)"></div>
<div style="left:1949px;top:253.5px;font-size:22.3px;line-height:26px;color:#f0f0f2;-webkit-text-stroke:.3px #f0f0f2;white-space:nowrap">Replace</div>

<div id="gut">
<div class="ln" style="top:-8px">20626</div>
<div class="ln" style="top:18px">20627</div>
<div class="ln" style="top:44px">20628</div>
<div class="ln" style="top:70px">20629</div>
<div class="ln" style="top:96px">20630</div>
<div class="ln" style="top:122px">20631</div>
<div class="ln" style="top:148px">20632</div>
<div class="ln" style="top:174px">20633</div>
<div class="ln" style="top:200px">20634</div>
<div class="ln" style="top:226px">20635</div>
<div class="ln" style="top:252px">20636</div>
<div class="ln" style="top:278px">20637</div>
<div class="ln" style="top:304px">20638</div>
<div class="ln" style="top:330px">20639</div>
<div class="ln" style="top:356px">20640</div>
<div class="ln" style="top:382px">20641</div>
<div class="ln" style="top:408px">20642</div>
<div class="ln" style="top:434px">20643</div>
<div class="ln" style="top:460px">20644</div>
<div class="ln" style="top:486px">20645</div>
<div class="ln" style="top:512px">20646</div>
<div class="ln" style="top:538px">20647</div>
<div class="ln" style="top:564px">20648</div>
<div class="ln" style="top:590px">20649</div>
<div class="ln" style="top:616px">20650</div>
<div class="ln" style="top:642px">20651</div>
<div class="ln" style="top:668px">20652</div>
<div class="ln" style="top:694px">20653</div>
<div class="ln" style="top:720px">20654</div>
<div class="ln" style="top:746px">20655</div>
<div class="ln" style="top:772px">20656</div>
<div class="ln" style="top:798px">20657</div>
<div class="ln" style="top:824px">20658</div>
<div class="ln" style="top:850px">20659</div>
<div class="ln" style="top:876px">20660</div>
<div class="ln" style="top:902px">20661</div>
<div class="ln" style="top:928px">20662</div>
<div class="ln" style="top:954px">20663</div>
<div class="ln" style="top:980px">20664</div>
<div class="ln" style="top:1006px">20665</div>
<div class="ln" style="top:1032px">20666</div>
<div class="ln" style="top:1058px">20667</div>
<div class="ln" style="top:1084px">20668</div>
<div class="ln" style="top:1110px">20669</div>
<div class="ln" style="top:1136px">20670</div>
<div class="ln" style="top:1162px">20671</div>
<div class="ln" style="top:1188px">20672</div>
</div><div id="code">
<div class="cl" style="top:-6px">                    <span class="t n">0x01</span>,               <span class="t c">// Alignment</span></div>
<div class="cl" style="top:20px">                    <span class="t n">0x02</span>,               <span class="t c">// Length</span></div>
<div class="cl" style="top:46px">                    )</div>
<div class="cl" style="top:72px">            })</div>
<div class="cl" style="top:98px">        }</div>
<div class="cl" style="top:124px"></div>
<div class="cl" style="top:150px">        <span class="t k">Device</span> (RTC)</div>
<div class="cl" style="top:176px">        {</div>
<div class="cl" style="top:202px">            <span class="t k">Name</span> (_HID, <span class="t k">EisaId</span> (<span class="t s">&quot;PNP0B00&quot;</span>) <span class="t c">/* AT Real-Time Clock */</span>)  <span class="t c">// _HID: Hardware ID</span></div>
<div class="cl" style="top:228px">            <span class="t k">Name</span> (_CRS, <span class="t g">ResourceTemplate</span> ()  <span class="t c">// _CRS: Current Resource Settings</span></div>
<div class="cl" style="top:254px">            {</div>
<div class="cl" style="top:280px">                <span class="t g">IO</span> (<span class="t m">Decode16</span>,</div>
<div class="cl" style="top:306px">                    <span class="t n">0x0070</span>,             <span class="t c">// Range Minimum</span></div>
<div class="cl" style="top:332px">                    <span class="t n">0x0070</span>,             <span class="t c">// Range Maximum</span></div>
<div class="cl" style="top:358px">                    <span class="t n">0x01</span>,               <span class="t c">// Alignment</span></div>
<div class="cl" style="top:384px">                    <span class="t n">0x08</span>,               <span class="t c">// Length</span></div>
<div class="cl" style="top:410px">                    )</div>
<div class="cl" style="top:436px">                <span class="t g">IRQNoFlags</span> ()</div>
<div class="cl" style="top:462px">                    {<span class="t n">8</span>}</div>
<div class="cl" style="top:488px">            })</div>
<div class="cl" style="top:514px">            <span class="t k">Method</span> (_STA, <span class="t n">0</span>, <span class="t m">NotSerialized</span>)  <span class="t c">// _STA: Status</span></div>
<div class="cl" style="top:540px">            {</div>
<div class="cl" style="top:566px">                <span class="t k">If</span> ((STAS == <span class="t n">One</span>))</div>
<div class="cl" style="top:592px">                {</div>
<div class="cl" style="top:618px">                    <span class="t k">Return</span> (<span class="t n">0x0F</span>)</div>
<div class="cl" style="top:644px">                }</div>
<div class="cl" style="top:670px">                <span class="t k">Else</span></div>
<div class="cl" style="top:696px">                {</div>
<div class="cl" style="top:722px">                    <span class="t k">Return</span> (<span class="t n">Zero</span>)</div>
<div class="cl" style="top:748px">                }</div>
<div class="cl" style="top:774px">            }</div>
<div class="cl" style="top:800px">        }</div>
<div class="cl" style="top:826px"></div>
<div class="cl" style="top:852px">        <span class="t k">Device</span> (TIMR)</div>
<div class="cl" style="top:878px">        {</div>
<div class="cl" style="top:904px">            <span class="t k">Name</span> (_HID, <span class="t k">EisaId</span> (<span class="t s">&quot;PNP0100&quot;</span>) <span class="t c">/* PC-class System Timer */</span>)  <span class="t c">// _HID: Hardware ID</span></div>
<div class="cl" style="top:930px">            <span class="t k">Name</span> (_CRS, <span class="t g">ResourceTemplate</span> ()  <span class="t c">// _CRS: Current Resource Settings</span></div>
<div class="cl" style="top:956px">            {</div>
<div class="cl" style="top:982px">                <span class="t g">IO</span> (<span class="t m">Decode16</span>,</div>
<div class="cl" style="top:1008px">                    <span class="t n">0x0040</span>,             <span class="t c">// Range Minimum</span></div>
<div class="cl" style="top:1034px">                    <span class="t n">0x0040</span>,             <span class="t c">// Range Maximum</span></div>
<div class="cl" style="top:1060px">                    <span class="t n">0x01</span>,               <span class="t c">// Alignment</span></div>
<div class="cl" style="top:1086px">                    <span class="t n">0x04</span>,               <span class="t c">// Length</span></div>
<div class="cl" style="top:1112px">                    )</div>
<div class="cl" style="top:1138px">                <span class="t g">IO</span> (<span class="t m">Decode16</span>,</div>
<div class="cl" style="top:1164px">                    <span class="t n">0x0050</span>,             <span class="t c">// Range Minimum</span></div>
<div class="cl" style="top:1190px">                    <span class="t n">0x0050</span>,             <span class="t c">// Range Maximum</span></div>
</div>
<div id="hl"><div id="hlt" style="left:8px;top:4px">STAS</div></div>
<div id="stline"></div><div id="st"></div>
<div class="sts" style="left:152.8px">DSDT</div>
<div class="sts" style="left:240.7px">_SB.PCI0.LPCB</div>
<div class="sts" style="left:437.2px">RTC</div>
<div class="sts" style="left:508px">_STA</div>
<svg style="left:225.2px;top:1517.5px" width="7" height="8" viewBox="0 0 7 8"><path d="M0 0L7 4L0 8Z" fill="#8e8f91"/></svg>
<svg style="left:421.1px;top:1517.5px" width="7" height="8" viewBox="0 0 7 8"><path d="M0 0L7 4L0 8Z" fill="#8e8f91"/></svg>
<svg style="left:492.5px;top:1517.5px" width="7" height="8" viewBox="0 0 7 8"><path d="M0 0L7 4L0 8Z" fill="#8e8f91"/></svg>
<div style="left:112px;top:1538px;width:1938px;height:2px;background:#595a5c"></div>
<div style="left:112px;top:78px;width:2px;height:152px;background:linear-gradient(#6a6b6d,#5a5b5d)"></div>
<div style="left:2048px;top:78px;width:2px;height:152px;background:linear-gradient(#6a6b6d,#5a5b5d)"></div>
<div style="left:112px;top:1500px;width:2px;height:38px;background:#5a5b5d"></div>
<div style="left:2048px;top:1500px;width:2px;height:38px;background:#5a5b5d"></div>
<div style="left:112px;top:234px;width:2px;height:1222px;background:#858688"></div>
<div style="left:2048px;top:232px;width:2px;height:1268px;background:#88898b"></div>

</div></body></html>
